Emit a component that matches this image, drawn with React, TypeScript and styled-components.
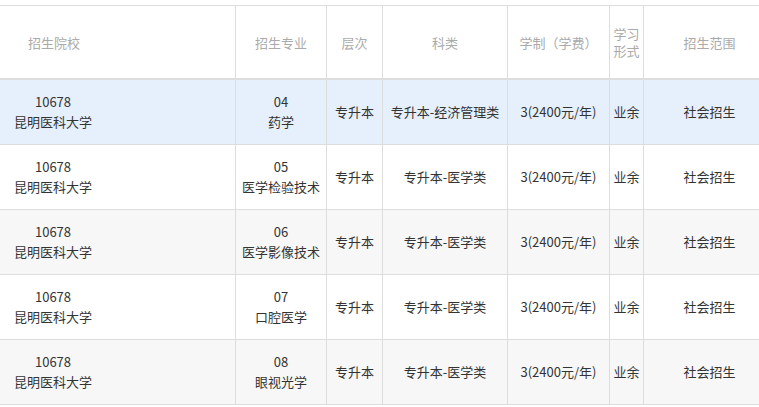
import React from "react";
import styled, { createGlobalStyle } from "styled-components";

const GlobalStyle = createGlobalStyle`
  body {
    margin: 0;
    overflow: hidden;
    background: #fff;
    font-family: "Noto Sans CJK SC", "Noto Sans", sans-serif;
  }
`;

const Wrap = styled.div`
  padding-top: 5px;
  width: 759px;
  overflow: hidden;
`;

const Table = styled.table`
  table-layout: fixed;
  border-collapse: separate;
  border-spacing: 0;
  width: 776px;
  font-size: 13px;
  line-height: 20px;
`;

const HeadCell = styled.th<{ $pr?: number }>`
  box-sizing: border-box;
  height: 75px;
  padding: 0 ${(p) => p.$pr ?? 2}px 0 2px;
  border-top: 1px solid #ddd;
  border-bottom: 2px solid #ddd;
  border-right: 1px solid #ddd;
  font-weight: normal;
  color: #aaa;
  text-align: center;
  vertical-align: middle;
  line-height: 17px;
`;

const Row = styled.tr<{ $bg: string }>`
  background: ${(p) => p.$bg};
`;

const Cell = styled.td<{ $pr?: number }>`
  box-sizing: border-box;
  height: 65px;
  padding: 0 ${(p) => p.$pr ?? 0}px 0 0;
  border-bottom: 1px solid #ddd;
  border-right: 1px solid #ddd;
  color: #333;
  text-align: center;
  vertical-align: middle;
  white-space: nowrap;
`;

const widths = [236, 91, 56, 125, 102, 34, 132];

const rows = [
  { code: "04", major: "药学", kind: "专升本-经济管理类", bg: "#e6f0fd" },
  { code: "05", major: "医学检验技术", kind: "专升本-医学类", bg: "#fff" },
  { code: "06", major: "医学影像技术", kind: "专升本-医学类", bg: "#f7f7f7" },
  { code: "07", major: "口腔医学", kind: "专升本-医学类", bg: "#fff" },
  { code: "08", major: "眼视光学", kind: "专升本-医学类", bg: "#f7f7f7" },
];

export default function App() {
  return (
    <Wrap>
      <GlobalStyle />
      <Table>
        <colgroup>
          {widths.map((w, i) => (
            <col key={i} style={{ width: w }} />
          ))}
        </colgroup>
        <thead>
          <tr>
            <HeadCell $pr={129}>招生院校</HeadCell>
            <HeadCell>招生专业</HeadCell>
            <HeadCell>层次</HeadCell>
            <HeadCell>科类</HeadCell>
            <HeadCell>学制（学费）</HeadCell>
            <HeadCell>学习形式</HeadCell>
            <HeadCell>招生范围</HeadCell>
          </tr>
        </thead>
        <tbody>
          {rows.map((r) => (
            <Row key={r.code} $bg={r.bg}>
              <Cell $pr={129}>
                10678
                <br />
                昆明医科大学
              </Cell>
              <Cell>
                {r.code}
                <br />
                {r.major}
              </Cell>
              <Cell>专升本</Cell>
              <Cell>{r.kind}</Cell>
              <Cell>3(2400元/年)</Cell>
              <Cell>业余</Cell>
              <Cell>社会招生</Cell>
            </Row>
          ))}
        </tbody>
      </Table>
    </Wrap>
  );
}
